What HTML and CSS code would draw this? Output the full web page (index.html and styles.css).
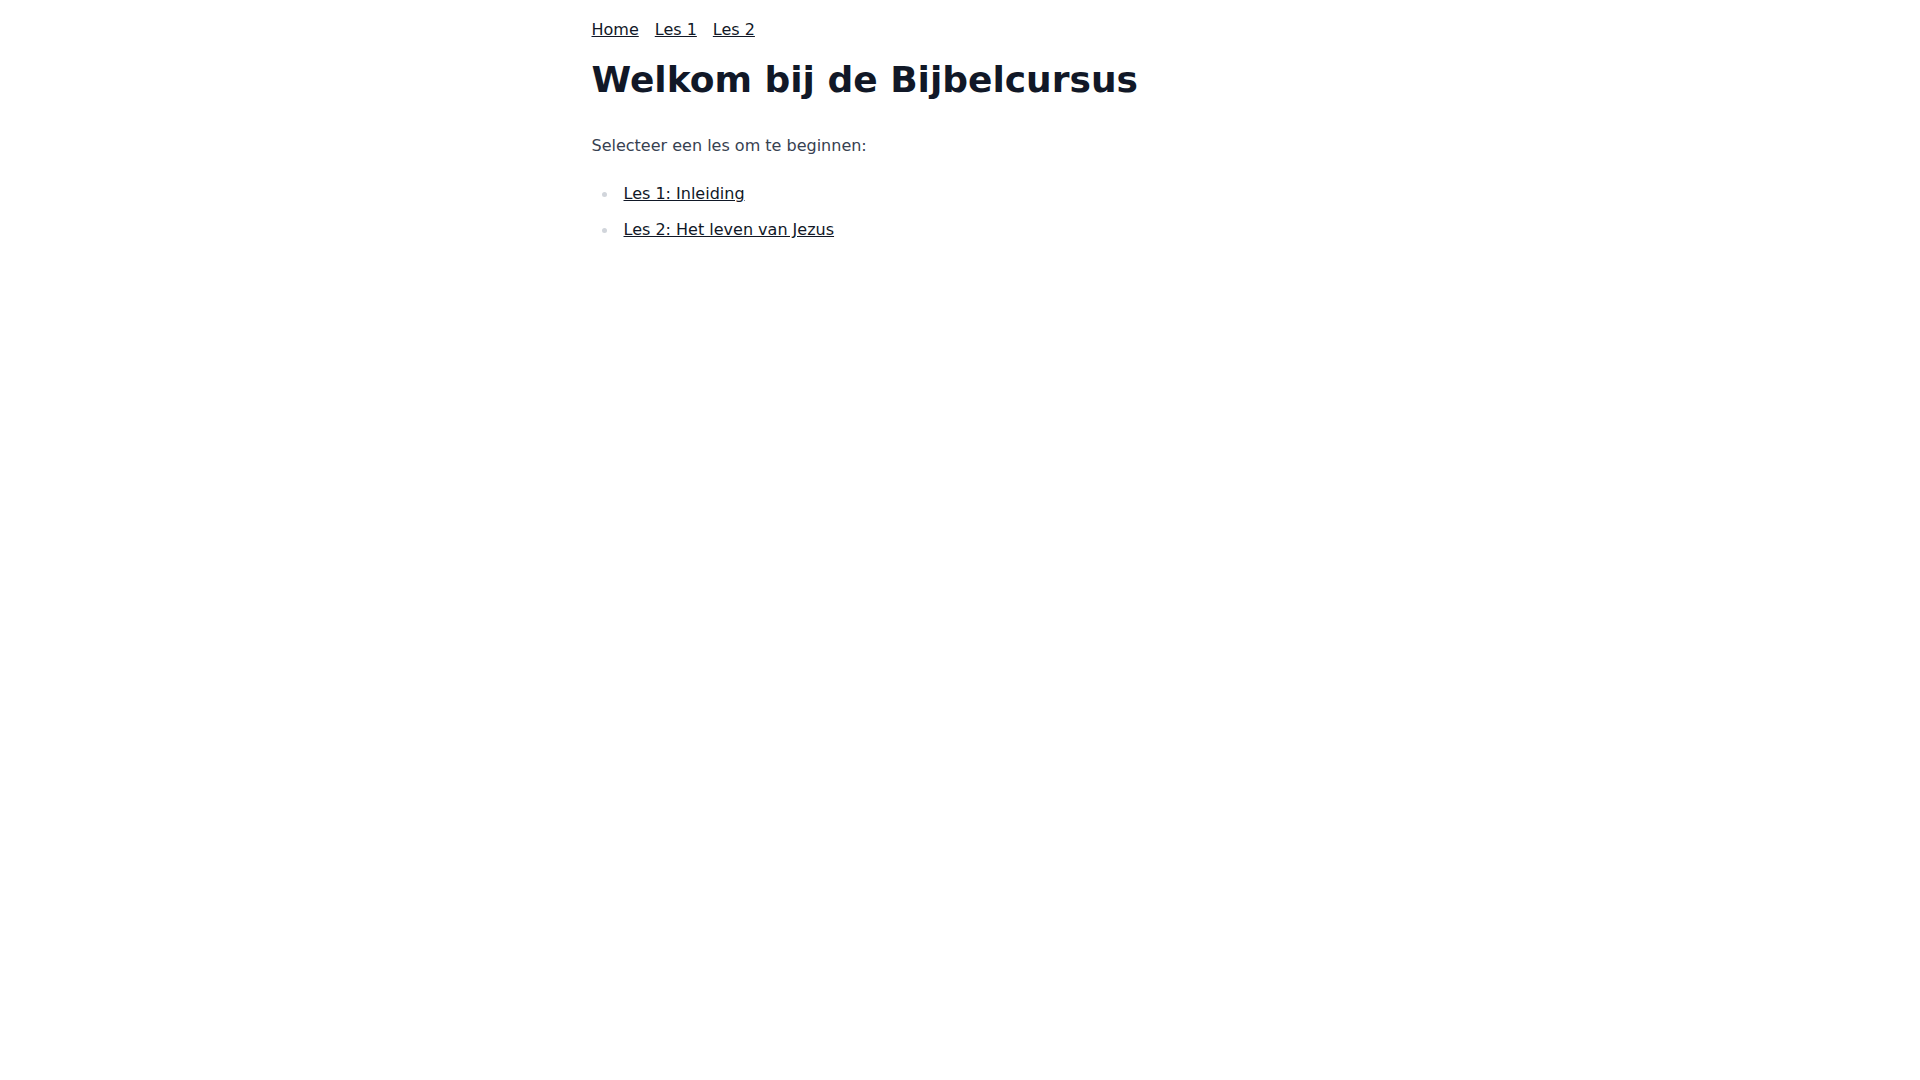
FILE: index.html
```html
<!DOCTYPE html>
<html lang="nl">
<head>
<meta charset="utf-8">
<title>Bijbelcursus</title>
<link rel="stylesheet" href="styles.css">
</head>
<body>
<div class="page">
  <nav class="nav">
    <a href="#">Home</a>
    <a href="#">Les 1</a>
    <a href="#">Les 2</a>
  </nav>
  <h1 class="title">Welkom bij de Bijbelcursus</h1>
  <p class="intro">Selecteer een les om te beginnen:</p>
  <ul class="lessons">
    <li><a href="#">Les 1: Inleiding</a></li>
    <li><a href="#">Les 2: Het leven van Jezus</a></li>
  </ul>
</div>
</body>
</html>
```
FILE: styles.css
```css
html, body {
  margin: 0;
  padding: 0;
  background: #ffffff;
}
body {
  font-family: "DejaVu Sans", Verdana, sans-serif;
  font-size: 16px;
  line-height: 24px;
  color: #111827;
}
.page {
  max-width: 737px;
  margin: 0 auto;
  padding: 18px 0 0;
}
.nav {
  display: flex;
  gap: 16px;
}
.nav a, .lessons a {
  color: #111827;
  text-decoration: underline;
}
.title {
  margin: 18px 0 0;
  font-size: 36px;
  line-height: 40px;
  font-weight: 700;
  color: #111827;
}
.intro {
  margin: 34px 0 0;
  color: #374151;
}
.lessons {
  list-style: none;
  margin: 24px 0 0;
  padding: 0;
}
.lessons li {
  display: flex;
  align-items: center;
  margin-bottom: 12px;
}
.lessons li::before {
  content: "";
  width: 5px;
  height: 5px;
  border-radius: 50%;
  background: #d1d5db;
  margin-left: 10px;
  margin-right: 17px;
  flex: none;
}
```
